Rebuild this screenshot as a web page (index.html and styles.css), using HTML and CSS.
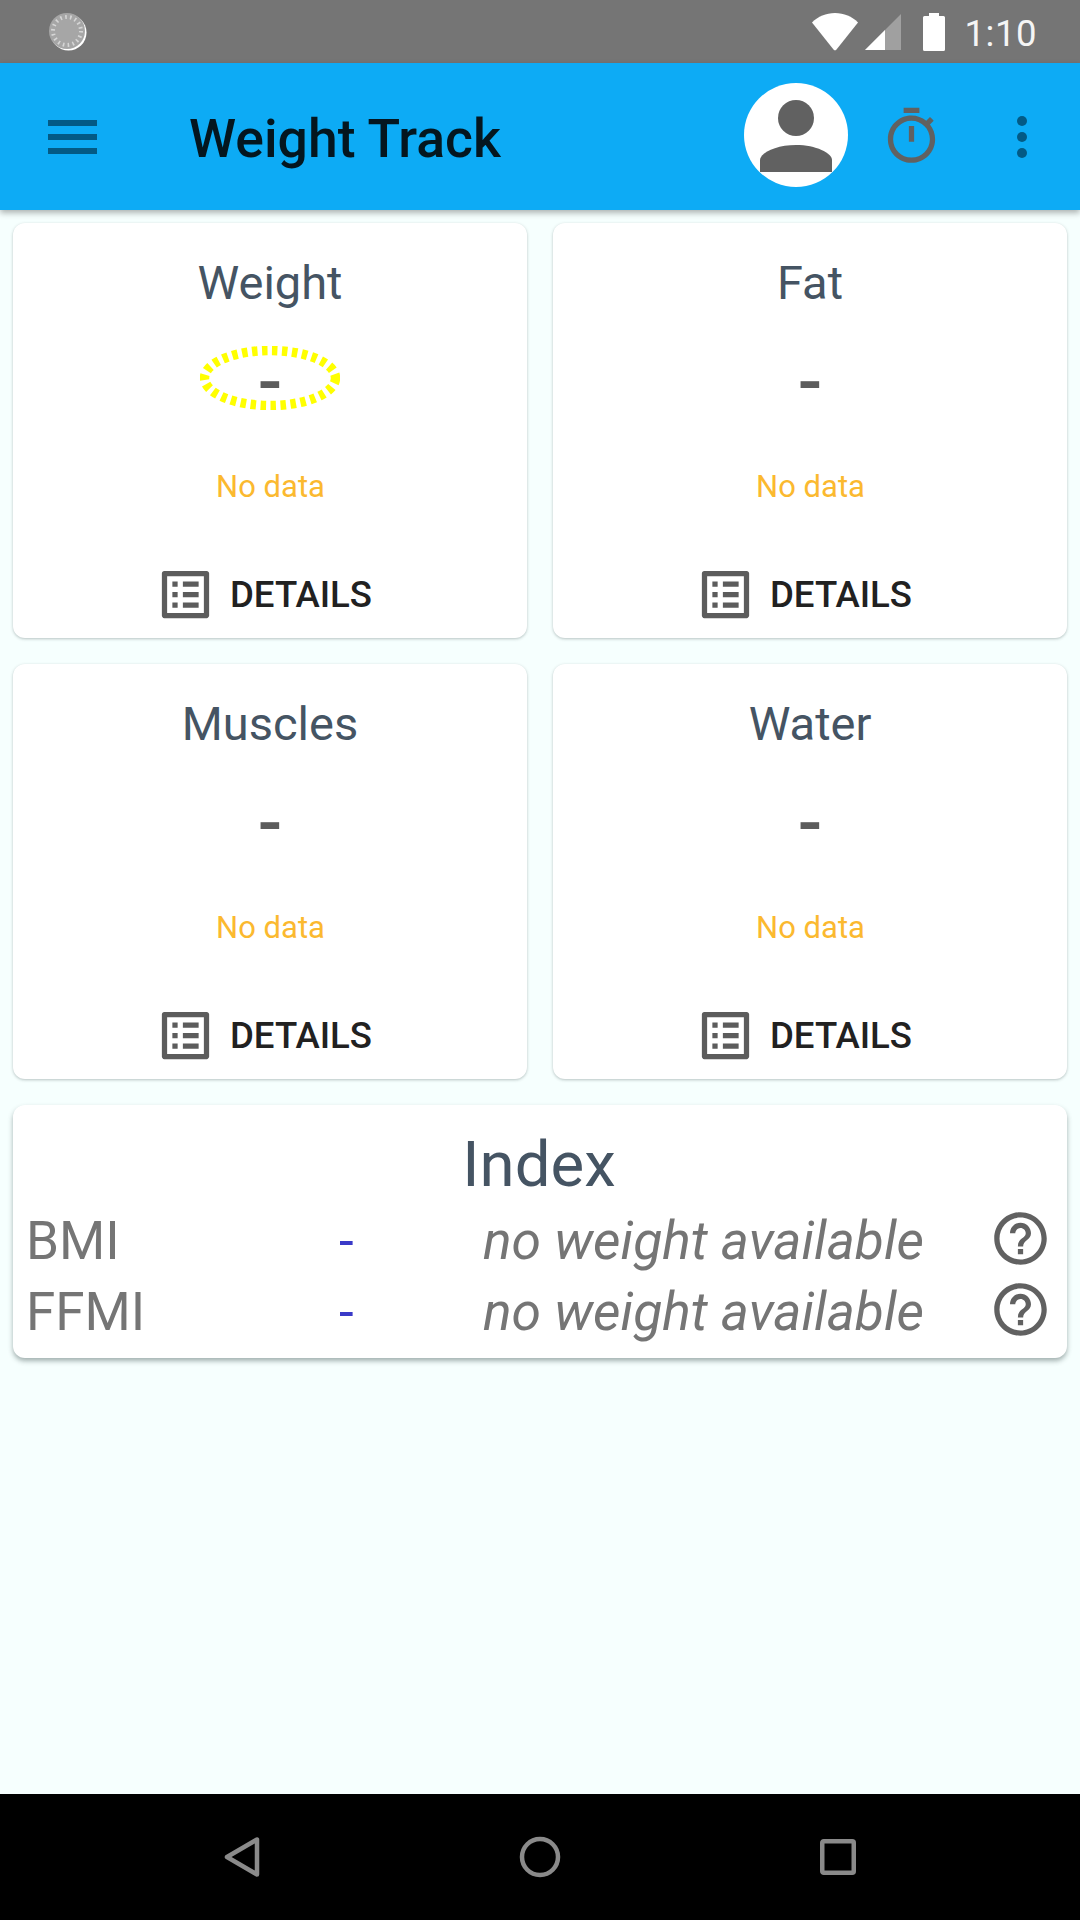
FILE: index.html
```html
<!DOCTYPE html>
<html>
<head>
  <meta charset="utf-8" />
  <title>Weight Track</title>
  <link rel="stylesheet" href="styles.css">
</head>
<body>

<svg class="sprite" width="0" height="0">
  <symbol id="ic-list" viewBox="0 0 24 24"><path d="M19 5v14H5V5h14m1.1-2H3.9c-.5 0-.9.4-.9.9v16.2c0 .4.4.9.9.9h16.2c.4 0 .9-.5.9-.9V3.9c0-.5-.5-.9-.9-.9zM11 7h6v2h-6V7zm0 4h6v2h-6v-2zm0 4h6v2h-6zM7 7h2v2H7zm0 4h2v2H7zm0 4h2v2H7z"/></symbol>
  <symbol id="ic-help" viewBox="0 0 24 24"><path d="M11 18h2v-2h-2v2zm1-16C6.48 2 2 6.48 2 12s4.48 10 10 10 10-4.48 10-10S17.52 2 12 2zm0 18c-4.41 0-8-3.59-8-8s3.59-8 8-8 8 3.59 8 8-3.59 8-8 8zm0-14c-2.21 0-4 1.79-4 4h2c0-1.1.9-2 2-2s2 .9 2 2c0 2-3 1.75-3 5h2c0-2.25 3-2.5 3-5 0-2.21-1.79-4-4-4z"/></symbol>
</svg>

<div class="statusbar">
  <svg class="spinner" width="38" height="38" viewBox="0 0 38 38">
    <circle cx="19.5" cy="19.5" r="18" fill="#fff"/>
    <circle cx="18" cy="18" r="18" fill="#a6a6a6"/>
    <circle cx="18" cy="18" r="14" fill="none" stroke="#d6d6d6" stroke-width="4" stroke-dasharray="1.6 3.3"/>
  </svg>
  <div class="status-right">
    <svg class="wifi" width="46" height="38" viewBox="0 0 46 38"><path d="M0 9.500C6 3.500 14 0 23 0s17 3.500 23 9.500L24.500 36.500a2 2 0 0 1-3 0z" fill="#fff"/></svg>
    <svg class="signal" width="36" height="36" viewBox="0 0 36 36">
      <path d="M0 36 L36 0 V36z" fill="#a0a0a0"/>
      <path d="M0 36 L20 16 V36z" fill="#fff"/>
    </svg>
    <svg class="battery" width="22" height="38" viewBox="0 0 22 38"><path d="M6 3V0h10v3h4.500a1.500 1.500 0 0 1 1.500 1.500V36.500a1.500 1.500 0 0 1-1.500 1.500H1.500A1.500 1.500 0 0 1 0 36.500V4.500A1.500 1.500 0 0 1 1.500 3z" fill="#fff"/></svg>
    <span class="clock">1:10</span>
  </div>
</div>

<header class="appbar">
  <div class="burger"><span></span><span></span><span></span></div>
  <div class="appbar-title">Weight Track</div>
  <div class="avatar">
    <svg width="76" height="72" viewBox="0 0 76 72" fill="#616161">
      <circle cx="38" cy="18" r="18"/>
      <path d="M2 72V60C2 53 18 45 38 45s36 8 36 15v12z"/>
    </svg>
  </div>
  <svg class="timer" width="63" height="63" viewBox="0 0 24 24" fill="#616161"><path d="M15 1H9v2h6V1zm-4 13h2V8h-2v6zm8.030-6.610l1.420-1.420c-.43-.51-.9-.99-1.410-1.410l-1.420 1.420C16.070 4.740 14.120 4 12 4c-4.970 0-9 4.030-9 9s4.020 9 9 9 9-4.030 9-9c0-2.120-.74-4.070-1.970-5.610zM12 20c-3.870 0-7-3.130-7-7s3.130-7 7-7 7 3.130 7 7-3.130 7-7 7z"/></svg>
  <div class="overflow"><span></span><span></span><span></span></div>
</header>

<main class="content">
  <div class="cards">
    <section class="card">
      <h2 class="card-title">Weight</h2>
      <div class="card-value">
        <span>-</span>
        <svg class="highlight" width="140" height="64" viewBox="0 0 140 64"><ellipse cx="70" cy="32" rx="65.500" ry="27.500" fill="none" stroke="#ffff00" stroke-width="9.500" stroke-dasharray="5.500 4.500"/></svg>
      </div>
      <div class="card-note">No data</div>
      <div class="details"><svg width="63" height="63"><use href="#ic-list"/></svg><span>DETAILS</span></div>
    </section>
    <section class="card">
      <h2 class="card-title">Fat</h2>
      <div class="card-value"><span>-</span></div>
      <div class="card-note">No data</div>
      <div class="details"><svg width="63" height="63"><use href="#ic-list"/></svg><span>DETAILS</span></div>
    </section>
    <section class="card">
      <h2 class="card-title">Muscles</h2>
      <div class="card-value"><span>-</span></div>
      <div class="card-note">No data</div>
      <div class="details"><svg width="63" height="63"><use href="#ic-list"/></svg><span>DETAILS</span></div>
    </section>
    <section class="card">
      <h2 class="card-title">Water</h2>
      <div class="card-value"><span>-</span></div>
      <div class="card-note">No data</div>
      <div class="details"><svg width="63" height="63"><use href="#ic-list"/></svg><span>DETAILS</span></div>
    </section>
  </div>

  <section class="card index-card">
    <h2 class="index-title">Index</h2>
    <div class="index-row">
      <span class="index-name">BMI</span>
      <span class="index-value">-</span>
      <span class="index-note">no weight available</span>
      <svg width="63" height="63"><use href="#ic-help"/></svg>
    </div>
    <div class="index-row">
      <span class="index-name">FFMI</span>
      <span class="index-value">-</span>
      <span class="index-note">no weight available</span>
      <svg width="63" height="63"><use href="#ic-help"/></svg>
    </div>
  </section>
</main>

<nav class="navbar">
  <svg width="36" height="42" viewBox="0 0 36 42"><path d="M33 3.500V38.500L3 21z" fill="none" stroke="#8a8a8a" stroke-width="4.500" stroke-linejoin="round"/></svg>
  <svg width="42" height="42" viewBox="0 0 42 42"><circle cx="21" cy="21" r="18" fill="none" stroke="#8a8a8a" stroke-width="4.500"/></svg>
  <svg width="36" height="36" viewBox="0 0 36 36"><rect x="2.250" y="2.250" width="31.500" height="31.500" rx="1.500" fill="none" stroke="#8a8a8a" stroke-width="4.500"/></svg>
</nav>

</body>
</html>
```

FILE: styles.css
```css
* {
  box-sizing: border-box;
}

html, body {
  margin: 0;
  padding: 0;
}

body {
  width: 1080px;
  height: 1920px;
  display: flex;
  flex-direction: column;
  overflow: hidden;
  background: #f6fffe;
  font-family: Roboto, "Liberation Sans", sans-serif;
}

.sprite {
  position: absolute;
}

/* status bar */
.statusbar {
  height: 63px;
  flex: none;
  display: flex;
  align-items: center;
  justify-content: space-between;
  padding: 0 43px 0 49px;
  background: #757575;
}

.status-right {
  display: flex;
  align-items: center;
}

.signal {
  margin-left: 7px;
}

.battery {
  margin-left: 22px;
}

.clock {
  margin-left: 20px;
  padding-top: 3px;
  color: #f5f5f5;
  font-size: 36.5px;
  letter-spacing: 0.5px;
}

/* app bar */
.appbar {
  height: 147px;
  flex: none;
  display: flex;
  align-items: center;
  padding-left: 48px;
  background: #0dabf5;
  box-shadow: 0 3px 6px rgba(0, 0, 0, 0.3);
  position: relative;
}

.burger {
  width: 49px;
  display: flex;
  flex-direction: column;
  gap: 8px;
}

.burger span {
  height: 6px;
  background: #035a85;
}

.appbar-title {
  margin-left: 92px;
  padding-top: 3px;
  font-size: 53.5px;
  font-weight: 500;
  color: #04161f;
}

.avatar {
  width: 104px;
  height: 104px;
  margin-left: auto;
  margin-top: -3px;
  padding-top: 17px;
  border-radius: 50%;
  background: #fff;
  display: flex;
  justify-content: center;
  overflow: hidden;
}

.timer {
  margin-left: 32px;
}

.overflow {
  width: 10px;
  margin: 0 53px 0 74px;
  display: flex;
  flex-direction: column;
  gap: 6px;
}

.overflow span {
  height: 10px;
  border-radius: 50%;
  background: #035a85;
}

/* cards */
.content {
  flex: 1;
  padding: 13px;
  display: flex;
  flex-direction: column;
  gap: 26px;
}

.cards {
  display: grid;
  grid-template-columns: 514px 514px;
  gap: 26px;
}

.card {
  background: #fff;
  border-radius: 12px;
  box-shadow: 0 1px 3px rgba(60, 80, 80, 0.35);
}

.cards .card {
  height: 415px;
  display: flex;
  flex-direction: column;
  align-items: center;
}

.card-title {
  margin: 32px 0 0;
  font-size: 47px;
  line-height: 56px;
  font-weight: 400;
  color: #455463;
}

.card-value {
  position: relative;
  width: 140px;
  height: 64px;
  margin-top: 35px;
  text-align: center;
  font-size: 72px;
  line-height: 74px;
  font-weight: 500;
  color: #5c5c5c;
}

.highlight {
  position: absolute;
  left: 0;
  top: 0;
}

.card-note {
  margin-top: 57px;
  padding-left: 1px;
  font-size: 31px;
  line-height: 40px;
  color: #fbb92f;
}

.details {
  margin-top: 56px;
  padding-right: 14px;
  display: flex;
  align-items: center;
  gap: 13px;
  font-size: 36.6px;
  font-weight: 500;
  color: #212121;
}

.details svg {
  fill: #5c5c5c;
}

.index-card {
  height: 253px;
  padding: 0 15px 0 13px;
  box-shadow: 0 3px 5px rgba(60, 80, 80, 0.45);
}

.index-title {
  margin: 0;
  padding-top: 20px;
  text-align: center;
  font-size: 63.5px;
  line-height: 80px;
  font-weight: 400;
  color: #455463;
}

.index-row {
  height: 71px;
  display: flex;
  align-items: center;
  color: #757575;
  font-size: 53px;
}

.index-row svg {
  fill: #616161;
  margin-left: 65px;
  margin-bottom: 4px;
}

.index-name {
  width: 313px;
}

.index-value {
  width: 30px;
  color: #3a3ac8;
}

.index-note {
  flex: 1;
  text-align: right;
  font-style: italic;
  font-size: 53.4px;
}

/* nav bar */
.navbar {
  height: 126px;
  flex: none;
  display: flex;
  align-items: center;
  justify-content: space-between;
  padding: 0 224px;
  background: #000;
}
```
